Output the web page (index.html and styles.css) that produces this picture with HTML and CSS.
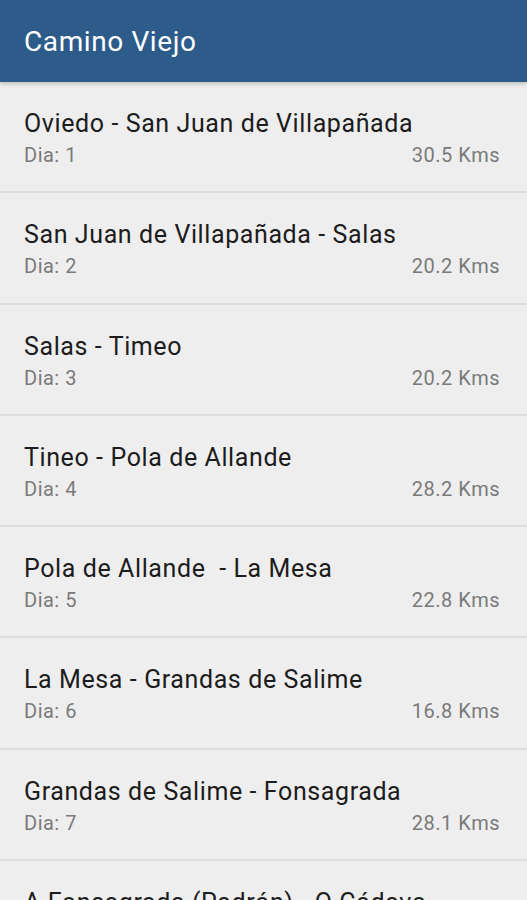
FILE: index.html
```html
<!DOCTYPE html>
<html lang="es">
<head>
    <meta charset="UTF-8">
    <meta name="viewport" content="width=device-width, initial-scale=1.0">
    <title>Camino Viejo</title>
    <link rel="stylesheet" href="styles.css">
</head>
<body>
    <header class="app-bar">
        <h1>Camino Viejo</h1>
    </header>

    <ul class="stages">
        <li class="stage">
            <div class="stage-title">Oviedo - San Juan de Villapañada</div>
            <div class="stage-info"><span>Dia: 1</span><span>30.5 Kms</span></div>
        </li>
        <li class="stage">
            <div class="stage-title">San Juan de Villapañada - Salas</div>
            <div class="stage-info"><span>Dia: 2</span><span>20.2 Kms</span></div>
        </li>
        <li class="stage">
            <div class="stage-title">Salas - Timeo</div>
            <div class="stage-info"><span>Dia: 3</span><span>20.2 Kms</span></div>
        </li>
        <li class="stage">
            <div class="stage-title">Tineo - Pola de Allande</div>
            <div class="stage-info"><span>Dia: 4</span><span>28.2 Kms</span></div>
        </li>
        <li class="stage">
            <div class="stage-title">Pola de Allande&nbsp; - La Mesa</div>
            <div class="stage-info"><span>Dia: 5</span><span>22.8 Kms</span></div>
        </li>
        <li class="stage">
            <div class="stage-title">La Mesa - Grandas de Salime</div>
            <div class="stage-info"><span>Dia: 6</span><span>16.8 Kms</span></div>
        </li>
        <li class="stage">
            <div class="stage-title">Grandas de Salime - Fonsagrada</div>
            <div class="stage-info"><span>Dia: 7</span><span>28.1 Kms</span></div>
        </li>
        <li class="stage">
            <div class="stage-title">A Fonsagrada (Padrón) - O Cádavo</div>
        </li>
    </ul>
</body>
</html>
```

FILE: styles.css
```css
/* Reset */
* {
    margin: 0;
    padding: 0;
    box-sizing: border-box;
    font-family: Roboto, 'Noto Sans', sans-serif;
}

body {
    background-color: #eeeeee;
    height: 900px;
    overflow: hidden;
}

/* Barra superior */
.app-bar {
    position: relative;
    z-index: 1;
    height: 82px;
    padding: 0 24px;
    display: flex;
    align-items: center;
    background-color: #2d5b8a;
    box-shadow: 0 2px 4px rgba(0, 0, 0, 0.2);
}

.app-bar h1 {
    color: #ffffff;
    font-size: 28px;
    font-weight: 400;
    letter-spacing: 0.6px;
    padding-top: 1px;
}

/* Lista de etapas */
.stages {
    list-style: none;
}

.stage {
    height: 111.3px;
    padding: 26px 27px 0 24px;
    border-bottom: 2px solid #dddddd;
}

.stage:last-child {
    height: auto;
    border-bottom: none;
}

.stage-title {
    color: #1c1c1c;
    font-size: 25px;
    letter-spacing: 0.6px;
    line-height: 32px;
    white-space: nowrap;
}

.stage-info {
    display: flex;
    justify-content: space-between;
    margin-top: 2px;
    color: #7a7a7a;
    font-size: 20px;
    letter-spacing: 0.5px;
    line-height: 26px;
}
```
